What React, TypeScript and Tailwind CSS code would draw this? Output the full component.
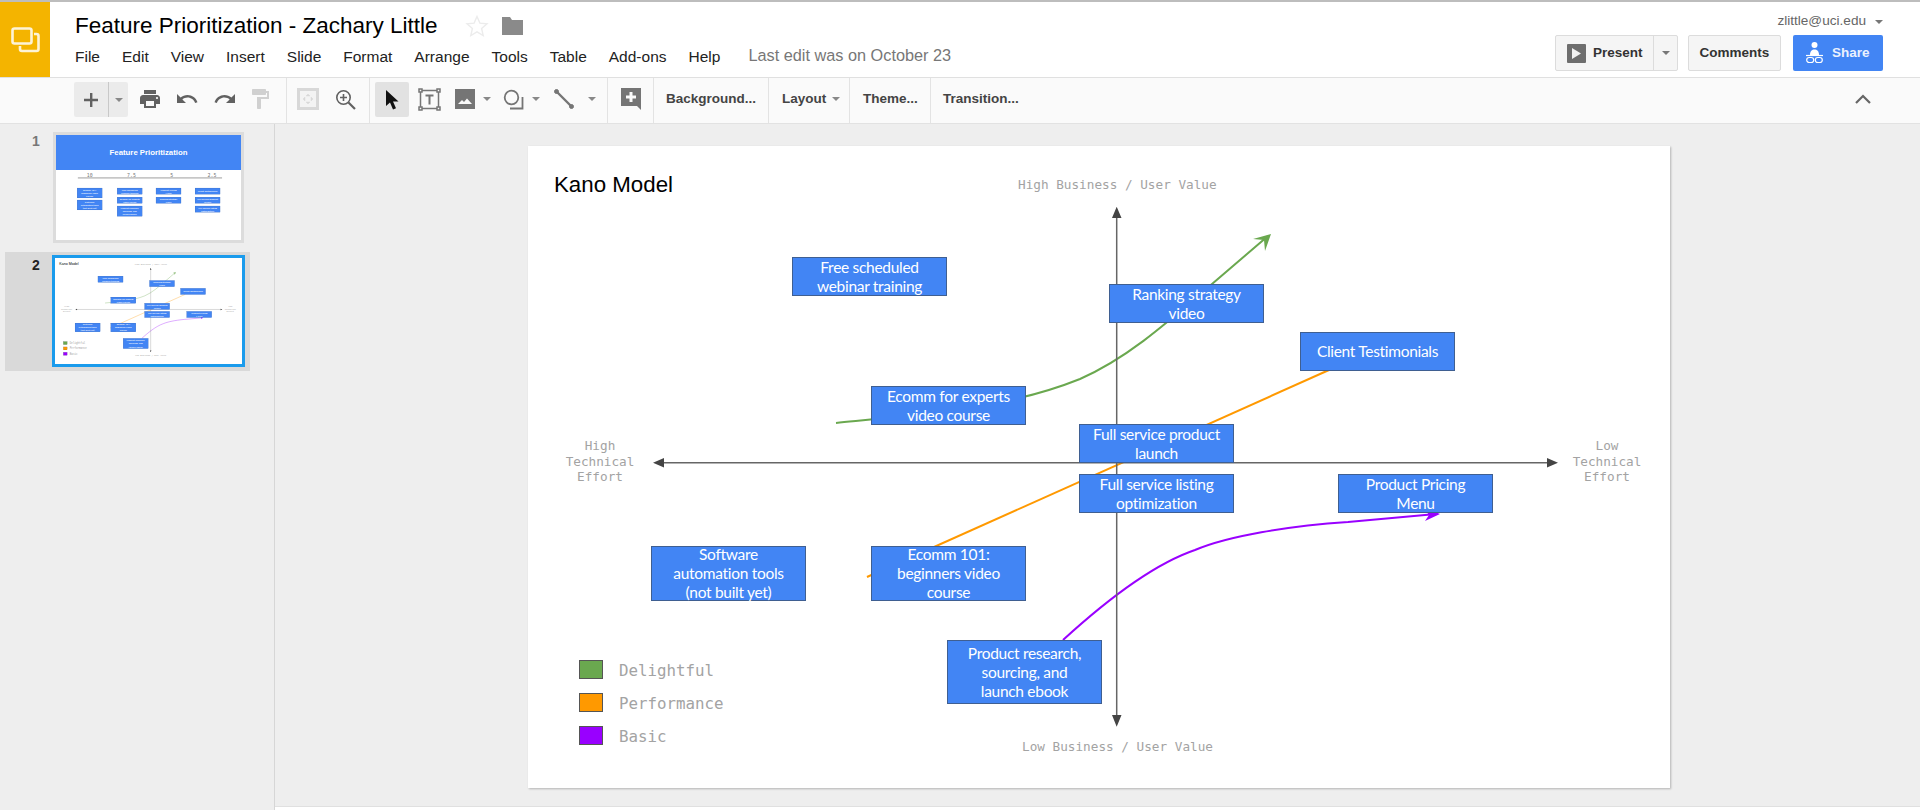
import React from 'react';

const arial = "font-['Liberation_Sans',Arial,sans-serif]";
const mono = "font-['DejaVu_Sans_Mono',monospace]";

const menuItems = ['File', 'Edit', 'View', 'Insert', 'Slide', 'Format', 'Arrange', 'Tools', 'Table', 'Add-ons', 'Help'];

interface BoxProps {
  x: number;
  y: number;
  h?: number;
  text: string;
}

function Box({ x, y, h = 39, text }: BoxProps) {
  return (
    <div
      className="absolute w-[155px] flex items-center justify-center bg-[#4285f4] border border-[#3f5f91] text-white text-center text-[15.5px] leading-[19px] tracking-[-0.3px] whitespace-pre-line font-['Lato',sans-serif]"
      style={{ left: x, top: y, height: h }}
    >
      {text}
    </div>
  );
}

function Caret({ color = '#888' }: { color?: string }) {
  return (
    <svg width="8" height="4" viewBox="0 0 8 4">
      <path d="M0 0h8L4 4z" fill={color} />
    </svg>
  );
}

function Icon({ d, color = '#616161', size = 24 }: { d: string; color?: string; size?: number }) {
  return (
    <svg width={size} height={size} viewBox="0 0 24 24">
      <path d={d} fill={color} />
    </svg>
  );
}

function Slot({ w, children, className = '' }: { w: string; children: React.ReactNode; className?: string }) {
  return <div className={`flex items-center justify-center h-full shrink-0 pb-[3px] ${w} ${className}`}>{children}</div>;
}

function Sep({ className = '' }: { className?: string }) {
  return <div className={`w-px h-full bg-[#e3e3e3] shrink-0 ${className}`} />;
}

function KanoSlide() {
  return (
    <div className="relative w-[1142px] h-[642px] bg-white overflow-hidden">
      <svg className="absolute inset-0" width="1142" height="642" viewBox="0 0 1142 642" fill="none">
        <path d="M308 277C400 268 480 262 552 233C600 212 640 176 684 138L740 90" stroke="#6aa84f" strokeWidth="2" />
        <path d="M743 88L725 93L736 94L737 105Z" fill="#6aa84f" />
        <path d="M339 431L801 224" stroke="#ff9900" strokeWidth="2" />
        <path d="M535 494C570 462 620 420 667 404C700 390 760 380 820 376L908 368" stroke="#9900ff" strokeWidth="2" />
        <path d="M912 368L894 360L901 369L897 375Z" fill="#9900ff" />
        <path d="M133 316.7H1022" stroke="#666" strokeWidth="1.5" />
        <path d="M125 316.7L136 312V321.5Z M1030 316.7L1019 312V321.5Z" fill="#444" />
        <path d="M588.7 70V572" stroke="#666" strokeWidth="1.5" />
        <path d="M588.7 60.7L584 72H593.5Z M588.7 580.7L584 569H593.5Z" fill="#444" />
      </svg>
      <div className={`absolute left-[26px] top-[26px] text-[22.3px] leading-[26px] text-black ${arial}`}>Kano Model</div>
      <div className={`absolute left-[490px] top-[31px] text-[12.7px] leading-4 text-[#a3a3a3] whitespace-nowrap ${mono}`}>High Business / User Value</div>
      <div className={`absolute left-[494px] top-[593px] text-[12.7px] leading-4 text-[#a3a3a3] whitespace-nowrap ${mono}`}>Low Business / User Value</div>
      <div className={`absolute left-[22px] top-[292px] w-[100px] text-center text-[12.7px] leading-[15.5px] text-[#a3a3a3] ${mono}`}>High<br />Technical<br />Effort</div>
      <div className={`absolute left-[1029px] top-[292px] w-[100px] text-center text-[12.7px] leading-[15.5px] text-[#a3a3a3] ${mono}`}>Low<br />Technical<br />Effort</div>
      <Box x={264} y={111} text={'Free scheduled\nwebinar training'} />
      <Box x={343} y={240} text={'Ecomm for experts\nvideo course'} />
      <Box x={581} y={138} text={'Ranking strategy\nvideo'} />
      <Box x={772} y={186} text="Client Testimonials" />
      <Box x={551} y={278} text={'Full service product\nlaunch'} />
      <Box x={551} y={328} text={'Full service listing\noptimization'} />
      <Box x={810} y={328} text={'Product Pricing\nMenu'} />
      <Box x={123} y={400} h={55} text={'Software\nautomation tools\n(not built yet)'} />
      <Box x={343} y={400} h={55} text={'Ecomm 101:\nbeginners video\ncourse'} />
      <Box x={419} y={494} h={64} text={'Product research,\nsourcing, and\nlaunch ebook'} />
      <div className={`absolute left-[51px] top-[514px] flex flex-col gap-[14px] text-[15.8px] text-[#a3a3a3] ${mono}`}>
        <div className="flex items-center gap-4 h-[19px]">
          <span className="w-6 h-[19px] bg-[#6aa84f] border border-[#555]" />
          <span className="pt-[3px]">Delightful</span>
        </div>
        <div className="flex items-center gap-4 h-[19px]">
          <span className="w-6 h-[19px] bg-[#ff9900] border border-[#555]" />
          <span className="pt-[3px]">Performance</span>
        </div>
        <div className="flex items-center gap-4 h-[19px]">
          <span className="w-6 h-[19px] bg-[#9900ff] border border-[#555]" />
          <span className="pt-[3px]">Basic</span>
        </div>
      </div>
    </div>
  );
}

function OverviewSlide() {
  return (
    <div className="relative w-[1142px] h-[642px] bg-white overflow-hidden">
      <div className={`h-[216px] bg-[#4285f4] flex items-center justify-center text-white text-[48px] font-bold ${arial}`}>Feature Prioritization</div>
      <svg className="absolute inset-0" width="1142" height="642" viewBox="0 0 1142 642" fill="none">
        <path d="M135 265H1025" stroke="#666" strokeWidth="4" />
      </svg>
      <div className={`absolute left-[190px] top-[225px] w-[800px] flex justify-between text-[30px] text-[#777] ${mono}`}>
        <span>10</span>
        <span>7.5</span>
        <span>5</span>
        <span>2.5</span>
      </div>
      <Box x={130} y={327} h={62} text={'Ecomm 101:\nbeginners video\ncourse'} />
      <Box x={130} y={401} h={62} text={'Software\nautomation tools\n(not built yet)'} />
      <Box x={377} y={327} text={'Free scheduled\nwebinar training'} />
      <Box x={377} y={383} text={'Ecomm for experts\nvideo course'} />
      <Box x={377} y={438} h={64} text={'Product research,\nsourcing, and\nlaunch ebook'} />
      <Box x={617} y={327} text={'Product Pricing\nMenu'} />
      <Box x={617} y={383} text={'Ranking strategy\nvideo'} />
      <Box x={858} y={327} text="Client Testimonials" />
      <Box x={858} y={383} text={'Full service product\nlaunch'} />
      <Box x={858} y={438} text={'Full service listing\noptimization'} />
    </div>
  );
}

function Header() {
  return (
    <header className="flex h-[76px] shrink-0 border-b border-[#e0e0e0] bg-white">
      <div className="w-[50px] h-full bg-[#f4b400] flex items-center justify-center shrink-0">
        <svg width="29" height="26" viewBox="0 0 29 26" fill="none" stroke="#fdf3d7" strokeWidth="2.6">
          <rect x="1.5" y="1.5" width="19" height="15" rx="2" />
          <path d="M23 7h2.5a2 2 0 0 1 2 2v13a2 2 0 0 1-2 2H11a2 2 0 0 1-2-2v-3" />
        </svg>
      </div>
      <div className={`pl-[25px] pt-[10px] ${arial}`}>
        <div className="flex items-center">
          <span className="text-[22.5px] leading-[28px] text-black">Feature Prioritization - Zachary Little</span>
          <svg className="ml-[27px]" width="24" height="24" viewBox="0 0 24 24" fill="none" stroke="#ececec" strokeWidth="1.4">
            <path d="M12 2.5l2.9 6.6 7.1.7-5.4 4.7 1.6 7-6.2-3.7-6.2 3.7 1.6-7L2 9.8l7.1-.7z" />
          </svg>
          <svg className="ml-[12px]" width="23" height="20" viewBox="0 0 23 20">
            <path d="M1 1h8l2 3h11v15H1z" fill="#8a8a8a" />
          </svg>
        </div>
        <div className="mt-[7px] flex items-start gap-[22px] text-[15.5px] leading-5 text-[#222]">
          {menuItems.map(item => (
            <span key={item}>{item}</span>
          ))}
          <span className="ml-[6px] -mt-[2px] text-[16.3px] text-[#777]">Last edit was on October 23</span>
        </div>
      </div>
      <div className={`ml-auto pr-[37px] flex flex-col items-end ${arial}`}>
        <div className="h-[33px] pt-[6px] flex items-center gap-[9px] text-[13.6px] text-[#666]">
          <span>zlittle@uci.edu</span>
          <Caret color="#777" />
        </div>
        <div className="flex text-[13.5px] font-bold h-9">
          <div className="w-[123px] h-full flex rounded-[2px] border border-[#dcdcdc] bg-[#f5f5f5] text-[#333]">
            <div className="w-[98px] flex items-center pl-[11px] gap-[7px] border-r border-[#dcdcdc]">
              <span className="w-[19px] h-[19px] bg-[#6e6e6e] rounded-[1px] flex items-center justify-center">
                <svg width="9" height="11" viewBox="0 0 9 11">
                  <path d="M0 0l9 5.5L0 11z" fill="#f2f2f2" />
                </svg>
              </span>
              Present
            </div>
            <div className="flex-1 flex items-center justify-center">
              <Caret color="#777" />
            </div>
          </div>
          <div className="ml-[10px] w-[93px] flex items-center justify-center rounded-[2px] border border-[#dcdcdc] bg-[#f5f5f5] text-[#333]">Comments</div>
          <div className="ml-[12px] w-[90px] flex items-center pl-[13px] gap-[9px] rounded-[2px] bg-[#4285f4] text-[#eaf1fe]">
            <svg width="17" height="26" viewBox="0 0 17 26" fill="none">
              <circle cx="8.5" cy="5" r="3" fill="#fff" />
              <path d="M4 15c0-4 2-5.500 4.500-5.500S13 11 13 15z" fill="#fff" />
              <path d="M0 15.500h17" stroke="#fff" strokeWidth="1.2" />
              <rect x="0.7" y="17.500" width="7" height="5" rx="2.500" stroke="#fff" strokeWidth="1.200" />
              <rect x="9.300" y="17.500" width="7" height="5" rx="2.500" stroke="#fff" strokeWidth="1.200" />
            </svg>
            Share
          </div>
        </div>
      </div>
    </header>
  );
}

function Toolbar() {
  return (
    <div className={`h-[46px] shrink-0 flex items-center pl-[74px] bg-[#fafafa] border-b border-[#e2e2e2] text-[13.5px] font-bold text-[#444] ${arial}`}>
      <div className="w-[54px] h-[35px] mb-[2px] flex rounded-[2px] bg-[#ebebeb]">
        <div className="w-[35px] flex items-center justify-center border-r border-[#c8c8c8]">
          <svg width="14" height="14" viewBox="0 0 14 14">
            <path d="M6 0h2.400v5.800H14v2.400H8.400V14H6V8.200H0V5.800h6z" fill="#616161" />
          </svg>
        </div>
        <div className="flex-1 flex items-center justify-center">
          <Caret />
        </div>
      </div>
      <Slot w="w-9 ml-1">
        <Icon d="M19 8H5c-1.660 0-3 1.340-3 3v6h4v4h12v-4h4v-6c0-1.660-1.340-3-3-3zm-3 11H8v-5h8v5zm3-7c-.55 0-1-.45-1-1s.45-1 1-1 1 .45 1 1-.45 1-1 1zm-1-9H6v4h12V3z" />
      </Slot>
      <Slot w="w-[38px]">
        <Icon d="M12.500 8c-2.650 0-5.050.99-6.900 2.600L2 7v9h9l-3.620-3.620c1.390-1.160 3.160-1.880 5.120-1.880 3.540 0 6.550 2.310 7.600 5.500l2.370-.78C21.080 11.030 17.150 8 12.500 8z" />
      </Slot>
      <Slot w="w-[38px]">
        <Icon d="M18.400 10.600C16.550 8.990 14.150 8 11.500 8c-4.650 0-8.580 3.030-9.960 7.220L3.900 16c1.050-3.190 4.050-5.500 7.600-5.500 1.950 0 3.730.72 5.120 1.880L13 16h9V7l-3.600 3.600z" />
      </Slot>
      <Slot w="w-8">
        <Icon color="#d0d0d0" d="M18 4V3c0-.55-.45-1-1-1H5c-.55 0-1 .45-1 1v4c0 .55.45 1 1 1h12c.55 0 1-.45 1-1V6h1v4H9v11c0 .55.45 1 1 1h2c.55 0 1-.45 1-1v-9h8V4h-3z" />
      </Slot>
      <Sep className="ml-[10px]" />
      <Slot w="w-[42px]">
        <svg width="22" height="22" viewBox="0 0 22 22" fill="none" stroke="#d8d8d8">
          <rect x="1.500" y="1.500" width="19" height="19" strokeWidth="3" fill="#f3f3f3" />
          <path d="M6 11l2-2v4zM16 11l-2-2v4zM11 6l-2 2h4zM11 16l-2-2h4z" fill="#d8d8d8" strokeWidth="0.5" />
        </svg>
      </Slot>
      <Slot w="w-8">
        <svg width="21" height="21" viewBox="0 0 21 21" fill="none" stroke="#616161" strokeWidth="1.600">
          <circle cx="8.500" cy="8.500" r="6.700" />
          <path d="M13.500 13.500L20 20" strokeWidth="2.200" />
          <path d="M8.500 5v7M5 8.500h7" />
        </svg>
      </Slot>
      <Sep className="ml-2" />
      <div className="ml-[5px] mb-[2px] w-[34px] h-[35px] rounded-[2px] bg-[#e2e2e2] flex items-center justify-center shrink-0">
        <svg width="16" height="22" viewBox="0 0 16 22">
          <path d="M2 1v16l4-3.500 3 7 3-1.300-3-6.700h5.500z" fill="#111" />
        </svg>
      </div>
      <Slot w="w-10">
        <svg width="23" height="23" viewBox="0 0 23 23" fill="none" stroke="#757575" strokeWidth="1.500">
          <rect x="2.500" y="2.500" width="18" height="18" />
          <rect x="1" y="1" width="3" height="3" fill="#fafafa" />
          <rect x="19" y="1" width="3" height="3" fill="#fafafa" />
          <rect x="1" y="19" width="3" height="3" fill="#fafafa" />
          <rect x="19" y="19" width="3" height="3" fill="#fafafa" />
          <path d="M7.500 7.500h8M11.500 7.500v9" strokeWidth="2" />
        </svg>
      </Slot>
      <Slot w="w-8">
        <svg width="20" height="20" viewBox="0 0 20 20">
          <path d="M0 0h20v20H0z" fill="#757575" />
          <path d="M3 15l4-4 2 2 3-3.500L17 15z" fill="#fafafa" />
        </svg>
      </Slot>
      <Slot w="w-[11px]">
        <Caret />
      </Slot>
      <Slot w="w-8 ml-[5px]">
        <svg width="21" height="21" viewBox="0 0 21 21" fill="none" stroke="#757575" strokeWidth="1.800">
          <circle cx="8.500" cy="8.500" r="6.800" />
          <path d="M19.500 8v11.500H7" />
        </svg>
      </Slot>
      <Slot w="w-[14px]">
        <Caret />
      </Slot>
      <Slot w="w-8 ml-[5px]">
        <svg width="20" height="20" viewBox="0 0 20 20" fill="none" stroke="#757575">
          <path d="M3 3l14 14" strokeWidth="2.400" />
          <circle cx="2.500" cy="2.500" r="2" fill="#757575" />
          <circle cx="17.500" cy="17.500" r="2" fill="#757575" />
        </svg>
      </Slot>
      <Slot w="w-[14px] ml-[5px]">
        <Caret />
      </Slot>
      <Sep className="ml-2" />
      <Slot w="w-[45px]">
        <svg width="20" height="22" viewBox="0 0 20 22">
          <path d="M0 0h20v22l-4-4H0z" fill="#757575" />
          <path d="M8.500 4h3v3.500H15v3h-3.500V14h-3v-3.500H5v-3h3.500z" fill="#fafafa" />
        </svg>
      </Slot>
      <Sep />
      <div className="px-3 mb-[3px] shrink-0">Background...</div>
      <Sep />
      <div className="pl-[13px] mb-[3px] w-[80px] flex items-center gap-[6px] shrink-0">
        Layout
        <Caret />
      </div>
      <Sep />
      <div className="pl-[13px] mb-[3px] w-[80px] shrink-0">Theme...</div>
      <Sep />
      <div className="pl-3 mb-[3px] shrink-0">Transition...</div>
      <svg className="ml-auto mr-[49px] mb-[3px]" width="16" height="10" viewBox="0 0 16 10" fill="none" stroke="#666" strokeWidth="2.200">
        <path d="M1 9l7-7 7 7" />
      </svg>
    </div>
  );
}

function Sidebar() {
  return (
    <aside className={`w-[275px] shrink-0 bg-[#eeeeee] border-r border-[#d6d6d6] ${arial}`}>
      <div className="flex mt-2">
        <div className="w-[32px] shrink-0" />
        <div className="w-[21px] text-[14px] font-bold text-[#777] leading-4 mt-[1px]">1</div>
        <div className="w-[191px] h-[111px] border-[3px] border-[#dcdcdc] bg-white overflow-hidden">
          <div className="origin-top-left scale-[0.162]">
            <OverviewSlide />
          </div>
        </div>
      </div>
      <div className="ml-[5px] mt-[9px] w-[245px] h-[119px] bg-[#d9d9d9] flex pt-[3px]">
        <div className="w-[27px] shrink-0" />
        <div className="w-5 text-[14px] font-bold text-[#222] leading-4 mt-[2px]">2</div>
        <div className="w-[193px] h-[112px] border-[3px] border-[#1a9bec] bg-white overflow-hidden">
          <div className="origin-top-left scale-[0.1625]">
            <KanoSlide />
          </div>
        </div>
      </div>
    </aside>
  );
}

export default function App() {
  return (
    <div className="w-[1920px] h-[810px] flex flex-col overflow-hidden bg-white">
      <div className="h-[2px] shrink-0 bg-[#bdbdbd]" />
      <Header />
      <Toolbar />
      <div className="flex flex-1 min-h-0">
        <Sidebar />
        <main className="flex-1 flex flex-col">
          <div className="h-[683px] bg-[#eeeeee] pl-[253px] pt-[22px] border-b border-[#e0e0e0]">
            <div className="w-[1142px] shadow-[1px_1px_2px_rgba(0,0,0,0.25)]">
              <KanoSlide />
            </div>
          </div>
        </main>
      </div>
    </div>
  );
}
